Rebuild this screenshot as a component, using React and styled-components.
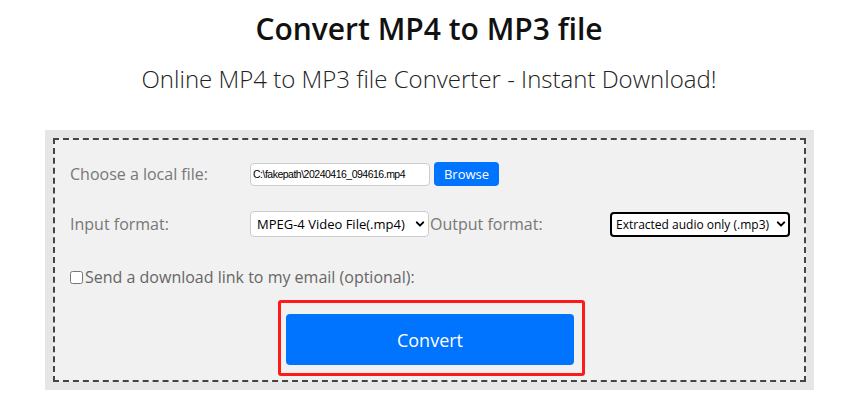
import React, { useState } from 'react';
import styled, { createGlobalStyle } from 'styled-components';

const GlobalStyle = createGlobalStyle`
  html, body {
    margin: 0;
    padding: 0;
    background: #fff;
  }
  body {
    font-family: "Open Sans", "Noto Sans", sans-serif;
  }
`;

const Page = styled.div`
  width: 858px;
  display: flex;
  flex-direction: column;
  align-items: center;
`;

const Title = styled.h1`
  margin: 11px 0 0;
  font-size: 30px;
  line-height: 36px;
  font-weight: 600;
  color: #111;
`;

const Subtitle = styled.h2`
  margin: 16px 0 0;
  font-size: 24px;
  line-height: 32px;
  font-weight: 300;
  color: #222;
`;

const Panel = styled.div`
  margin: 35px 0 0 1px;
  width: 769px;
  box-sizing: border-box;
  padding: 8px;
  background: #e6e6e6;
`;

const Dashed = styled.form`
  border: 2px dashed #444;
  background: #f1f1f1;
  padding: 9px 15px 4px;
  display: flex;
  flex-direction: column;
`;

const Grid = styled.div`
  display: grid;
  grid-template-columns: repeat(4, 180px);
  grid-auto-rows: 50px;
  align-items: center;
`;

const Label = styled.label`
  font-size: 16px;
  color: #777;
  white-space: nowrap;
`;

const Cell = styled.div`
  display: flex;
  align-items: center;
  gap: 4px;
`;

const FileBox = styled.div`
  width: 180px;
  height: 23px;
  box-sizing: border-box;
  border: 1px solid #ccc;
  border-radius: 4px;
  background: #fff;
  font-family: "Liberation Sans", Arial, sans-serif;
  font-size: 10.5px;
  letter-spacing: -0.5px;
  color: #000;
  display: flex;
  align-items: center;
  padding-left: 2px;
  white-space: nowrap;
  overflow: hidden;
`;

const SmallButton = styled.button`
  flex: none;
  width: 65px;
  height: 24px;
  border: none;
  border-radius: 4px;
  background: #0073ff;
  color: #fff;
  font-family: inherit;
  font-size: 13px;
  padding: 0;
  cursor: pointer;
`;

const SelectWrap = styled.div`
  position: relative;
  width: ${(p) => p.$width}px;
`;

const Select = styled.select`
  appearance: none;
  width: 100%;
  height: ${(p) => (p.$focused ? 25 : 26)}px;
  box-sizing: border-box;
  border: ${(p) => (p.$focused ? '2px solid #000' : '1px solid #ccc')};
  border-radius: 4px;
  background: #fff;
  color: #000;
  font-family: inherit;
  font-size: ${(p) => p.$size}px;
  padding: 0 14px 0 ${(p) => (p.$focused ? 4 : 6)}px;
  outline: none;
`;

const Chevron = styled.svg`
  position: absolute;
  right: 4px;
  top: 50%;
  width: 10px;
  height: 10px;
  transform: translateY(-50%);
  pointer-events: none;
`;

const CheckRow = styled.label`
  margin-top: 16px;
  height: 24px;
  display: flex;
  align-items: center;
  font-size: 16px;
  color: #666;
`;

const Check = styled.input`
  margin: 0 2px 0 0;
  width: 13px;
  height: 13px;
`;

const Highlight = styled.div`
  align-self: center;
  margin: 11px 0 0 4px;
  border: 3px solid #ff1a1a;
  border-radius: 3px;
  padding: 11px 8px 8px 5px;
`;

const BigButton = styled.button`
  display: block;
  width: 288px;
  height: 51px;
  border: none;
  border-radius: 4px;
  background: #0073ff;
  color: #fff;
  font-family: inherit;
  font-size: 18px;
  cursor: pointer;
`;

const Dropdown = ({ width, size, focused, options, value }) => (
  <SelectWrap $width={width}>
    <Select $size={size} $focused={focused} defaultValue={value}>
      {options.map((o) => (
        <option key={o} value={o}>{o}</option>
      ))}
    </Select>
    <Chevron viewBox="0 0 10 10">
      <path d="M1.8 3.4 L5 6.6 L8.2 3.4" fill="none" stroke="#000" strokeWidth="2" strokeLinecap="round" strokeLinejoin="round" />
    </Chevron>
  </SelectWrap>
);

export default function App() {
  const [sendMail, setSendMail] = useState(false);

  return (
    <Page>
      <GlobalStyle />
      <Title>Convert MP4 to MP3 file</Title>
      <Subtitle>Online MP4 to MP3 file Converter - Instant Download!</Subtitle>

      <Panel>
        <Dashed onSubmit={(e) => e.preventDefault()}>
          <Grid>
            <Label>Choose a local file:</Label>
            <Cell style={{ gridColumn: 'span 3' }}>
              <FileBox>C:\fakepath\20240416_094616.mp4</FileBox>
              <SmallButton type="button">Browse</SmallButton>
            </Cell>

            <Label>Input format:</Label>
            <Dropdown
              width={179}
              size={13}
              value="MPEG-4 Video File(.mp4)"
              options={['MPEG-4 Video File(.mp4)']}
            />
            <Label>Output format:</Label>
            <Dropdown
              width={180}
              size={12}
              focused
              value="Extracted audio only (.mp3)"
              options={['Extracted audio only (.mp3)']}
            />
          </Grid>

          <CheckRow>
            <Check type="checkbox" checked={sendMail} onChange={() => setSendMail(!sendMail)} />
            Send a download link to my email (optional):
          </CheckRow>

          <Highlight>
            <BigButton type="submit">Convert</BigButton>
          </Highlight>
        </Dashed>
      </Panel>
    </Page>
  );
}
